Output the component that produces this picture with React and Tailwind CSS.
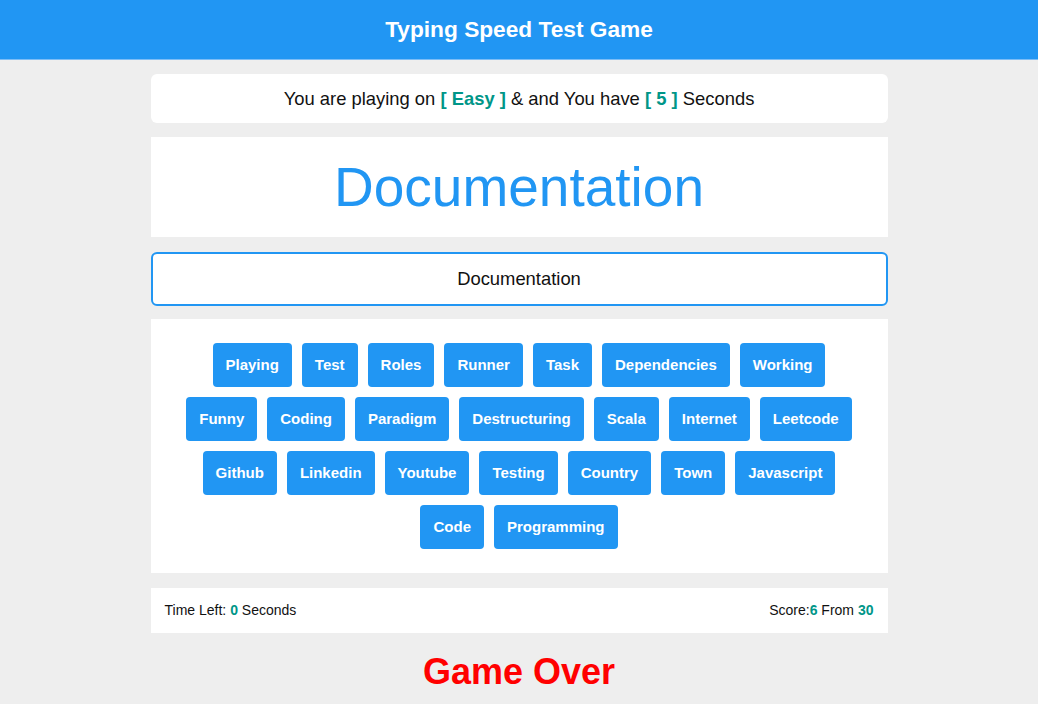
import React from "react";

const words = [
  "Playing","Test","Roles","Runner","Task","Dependencies","Working",
  "Funny","Coding","Paradigm","Destructuring","Scala","Internet","Leetcode",
  "Github","Linkedin","Youtube","Testing","Country","Town","Javascript",
  "Code","Programming",
];

export default function App() {
  return (
    <div className="min-h-[704px] bg-[#eeeeee] text-[#111] font-['Liberation_Sans',Arial,sans-serif]">
      <div className="h-[60px] bg-[#2196f3] border-b border-[#7dbdf6] flex items-center justify-center">
        <h1 className="text-white font-bold text-[22.7px] leading-none">Typing Speed Test Game</h1>
      </div>
      <div className="w-[737px] mx-auto pt-[14px] flex flex-col">
        <div className="h-[49px] bg-white rounded-[6px] flex items-center justify-center text-[18.4px]">
          <span>
            You are playing on <span className="text-[#009688] font-bold">[ Easy ]</span> &amp; and You have{" "}
            <span className="text-[#009688] font-bold">[ 5 ]</span> Seconds
          </span>
        </div>
        <div className="mt-[14px] h-[100px] bg-white flex items-center justify-center">
          <span className="text-[#2196f3] text-[55px] leading-none">Documentation</span>
        </div>
        <div className="mt-[15px] h-[54px] bg-white border-2 border-[#2196f3] rounded-[6px] flex items-center justify-center text-[18.4px]">
          Documentation
        </div>
        <div className="mt-[13px] bg-white px-[25px] py-[24px] flex flex-wrap justify-center gap-x-[10px] gap-y-[10px]">
          {words.map((w) => (
            <span
              key={w}
              className="h-[44px] px-[13px] bg-[#2196f3] text-white font-bold text-[15px] rounded-[4px] flex items-center"
            >
              {w}
            </span>
          ))}
        </div>
        <div className="mt-[15px] h-[45px] bg-white px-[14px] flex items-center justify-between text-[14px]">
          <span>
            Time Left: <span className="text-[#009688] font-bold">0</span> Seconds
          </span>
          <span>
            Score:<span className="text-[#009688] font-bold">6</span> From{" "}
            <span className="text-[#009688] font-bold">30</span>
          </span>
        </div>
        <div className="mt-[21px] text-center text-[#ff0000] font-bold text-[36px] leading-none">
          Game Over
        </div>
      </div>
    </div>
  );
}
